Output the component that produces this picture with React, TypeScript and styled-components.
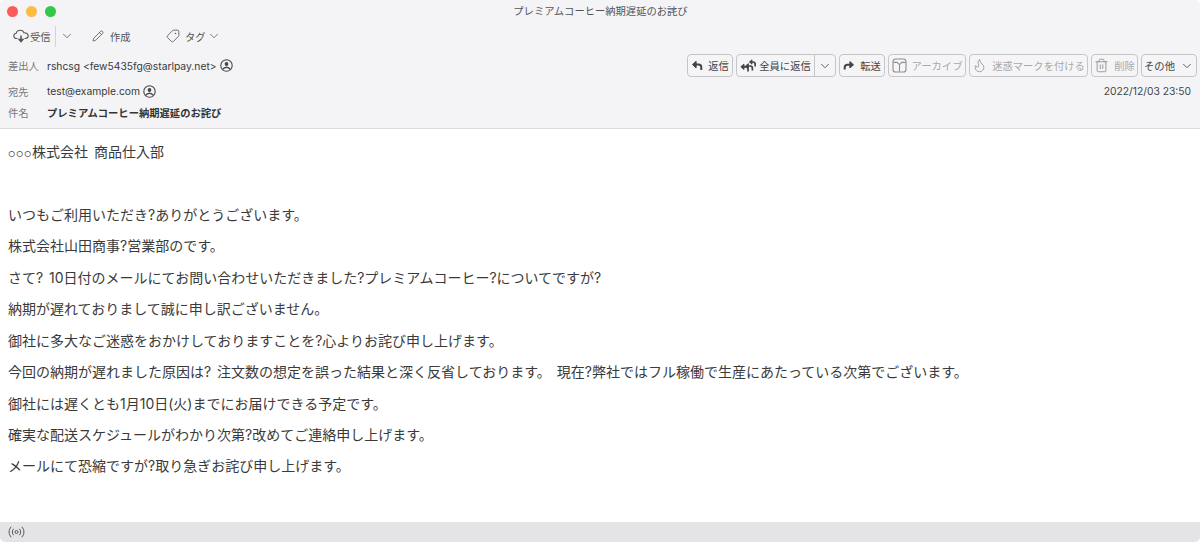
import React from "react";
import styled, { createGlobalStyle } from "styled-components";
import { ChevronDown, Flame, Pencil, Tag, Trash2 } from "lucide-react";

const FONT = `"Inter", "Liberation Sans", "Noto Sans CJK JP", sans-serif`;

const LINES = [
    "",
    "いつもご利用いただき?ありがとうございます。",
    "株式会社山田商事?営業部のです。",
    "さて? 10日付のメールにてお問い合わせいただきました?プレミアムコーヒー?についてですが?",
    "納期が遅れておりまして誠に申し訳ございません。",
    "御社に多大なご迷惑をおかけしておりますことを?心よりお詫び申し上げます。",
    "今回の納期が遅れました原因は? 注文数の想定を誤った結果と深く反省しております。 現在?弊社ではフル稼働で生産にあたっている次第でございます。",
    "御社には遅くとも1月10日(火)までにお届けできる予定です。",
    "確実な配送スケジュールがわかり次第?改めてご連絡申し上げます。",
    "メールにて恐縮ですが?取り急ぎお詫び申し上げます。",
];

const CloudIcon = () => (
    <svg width="16" height="16" viewBox="0 0 16 16" fill="none" stroke="currentColor" strokeWidth="1.1">
        <path d="M4.5 10.5H3.6C2 10.5 0.8 9.4 0.8 7.9C0.8 6.5 1.9 5.4 3.2 5.3C3.6 3.4 5.2 2.2 7.2 2.2C9 2.2 10.5 3.2 11 4.8C13.3 4.6 15.2 6 15.2 7.8C15.2 9.4 14 10.5 12.3 10.5H11.5" />
        <path d="M8 7.5V13.4" strokeWidth="1.5" />
        <path d="M5.8 11.4L8 14L10.2 11.4Z" fill="currentColor" />
    </svg>
);

const PersonGlyph = () => (
    <svg width="13" height="13" viewBox="0 0 13 13" fill="none" stroke="#48484a" strokeWidth="1.1">
        <circle cx="6.5" cy="6.5" r="5.7" />
        <circle cx="6.5" cy="5" r="1.9" fill="#48484a" stroke="none" />
        <path d="M3 10.3C3.6 8.9 4.8 8.2 6.5 8.2C8.2 8.2 9.4 8.9 10 10.3" strokeWidth="1.4" />
    </svg>
);

const ReplyIcon = () => (
    <svg width="12" height="11" viewBox="0 0 11 11" fill="none" stroke="currentColor">
        <path d="M4.6 1.3L1 4.6L4.6 7.9Z" fill="currentColor" strokeWidth="1" strokeLinejoin="round" />
        <path d="M4 4.6H7C8.8 4.6 9.8 5.8 9.8 7.6V10" strokeWidth="2" />
    </svg>
);

const ForwardIcon = () => (
    <svg width="12" height="11" viewBox="0 0 11 11" fill="none" stroke="currentColor">
        <path d="M6.4 1.6L10 4.8L6.4 8Z" fill="currentColor" strokeWidth="1" strokeLinejoin="round" />
        <path d="M7 4.8H4C2.2 4.8 1.2 6 1.2 7.8V9.6" strokeWidth="2" />
    </svg>
);

const ReplyAllIcon = () => (
    <svg width="16" height="14" viewBox="0 0 16 14" fill="none" stroke="currentColor">
        <path d="M4 5L0.8 7.8L4 10.6Z" fill="currentColor" strokeWidth="0.8" strokeLinejoin="round" />
        <path d="M3.4 7.8H6C7.4 7.8 8 8.8 8 10.2V12.4" strokeWidth="1.7" />
        <path d="M8.4 4.6L5.6 7L8.4 9.2Z" fill="currentColor" strokeWidth="0.8" strokeLinejoin="round" />
        <path d="M8 7H10.4C11.8 7 12.4 8 12.4 9.4V11.6" strokeWidth="1.7" />
        <path d="M12 0.8L9.4 3L12 5.2Z" fill="currentColor" strokeWidth="0.8" strokeLinejoin="round" />
        <path d="M11.6 3H13C14.4 3 15.2 4 15.2 5.4V7.4" strokeWidth="1.7" />
    </svg>
);

const ArchiveIcon = () => (
    <svg width="15" height="15" viewBox="0 0 15 15" fill="none" stroke="currentColor" strokeWidth="1.1">
        <rect x="1" y="1" width="13" height="13" rx="2.6" />
        <path d="M1.4 4.4H5L7.5 6.6L10 4.4H13.6" />
        <path d="M7.5 6.6V13.6" />
    </svg>
);

const RadioIcon = () => (
    <svg width="17" height="12" viewBox="0 0 17 12" fill="none" stroke="currentColor" strokeWidth="1">
        <circle cx="8.5" cy="6" r="1.5" />
        <path d="M5.6 2.8C4 4.6 4 7.4 5.6 9.2" />
        <path d="M11.4 2.8C13 4.6 13 7.4 11.4 9.2" />
        <path d="M3.2 0.8C0.4 3.8 0.4 8.2 3.2 11.2" />
        <path d="M13.8 0.8C16.6 3.8 16.6 8.2 13.8 11.2" />
    </svg>
);

const App = () => {
    return (
        <Window>
            <GlobalStyle />
            <Header>
                <TitleBar>
                    <Lights>
                        <Light color="#fc5b57" />
                        <Light color="#fdbc40" />
                        <Light color="#34c84a" />
                    </Lights>
                    <Title>プレミアムコーヒー納期遅延のお詫び</Title>
                </TitleBar>
                <Toolbar>
                    <ToolItem width={42}>
                        <CloudIcon />
                        受信
                    </ToolItem>
                    <ToolDivider />
                    <ToolChevron>
                        <ChevronDown size={14} strokeWidth={1.3} />
                    </ToolChevron>
                    <ToolItem width={74}>
                        <Pencil size={12} strokeWidth={1.6} />
                        <ToolLabel left={5}>作成</ToolLabel>
                    </ToolItem>
                    <ToolItem width={70}>
                        <MirrorTag size={14} strokeWidth={1.4} />
                        <ToolLabel left={4}>タグ</ToolLabel>
                        <ChevronDown size={14} strokeWidth={1.3} />
                    </ToolItem>
                </Toolbar>
                <MetaRow height={29}>
                    <Label>差出人</Label>
                    <Value>rshcsg &lt;few5435fg@starlpay.net&gt;</Value>
                    <PersonGlyph />
                    <Actions>
                        <ActionButton width={46}>
                            <ReplyIcon />
                            返信
                        </ActionButton>
                        <SplitButton>
                            <SplitMain>
                                <ReplyAllIcon />
                                全員に返信
                            </SplitMain>
                            <SplitArrow>
                                <ChevronDown size={14} strokeWidth={1.4} />
                            </SplitArrow>
                        </SplitButton>
                        <ActionButton width={46}>
                            <ForwardIcon />
                            転送
                        </ActionButton>
                        <ActionButton width={78} disabled>
                            <DimIcon>
                                <ArchiveIcon />
                            </DimIcon>
                            アーカイブ
                        </ActionButton>
                        <ActionButton width={119} disabled>
                            <DimIcon>
                                <Flame size={15} strokeWidth={1.3} />
                            </DimIcon>
                            迷惑マークを付ける
                        </ActionButton>
                        <ActionButton width={47} disabled>
                            <DimIcon>
                                <Trash2 size={15} strokeWidth={1.4} />
                            </DimIcon>
                            削除
                        </ActionButton>
                        <ActionButton width={56}>
                            その他
                            <ChevronDown size={14} strokeWidth={1.4} />
                        </ActionButton>
                    </Actions>
                </MetaRow>
                <MetaRow height={22}>
                    <Label>宛先</Label>
                    <Value>test@example.com</Value>
                    <PersonGlyph />
                    <DateText>2022/12/03 23:50</DateText>
                </MetaRow>
                <MetaRow height={21}>
                    <Label>件名</Label>
                    <Subject>プレミアムコーヒー納期遅延のお詫び</Subject>
                </MetaRow>
            </Header>
            <Body>
                <Line>
                    <SmallCircles>○○○</SmallCircles>株式会社 商品仕入部
                </Line>
                {LINES.map((line, ind) => (
                    <Line key={ind}>{line}</Line>
                ))}
            </Body>
            <StatusBar>
                <RadioIcon />
            </StatusBar>
        </Window>
    );
};

export default App;

const GlobalStyle = createGlobalStyle`
    html, body {
        margin: 0;
        padding: 0;
        background: #ffffff;
    }
`;

const Window = styled.div`
    width: 1200px;
    height: 542px;
    overflow: hidden;
    border-radius: 5px;
    display: flex;
    flex-direction: column;
    font-family: ${FONT};
    color: #333333;
`;

const Header = styled.header`
    height: 129px;
    box-sizing: border-box;
    flex: none;
    background: #f4f4f6;
    border-bottom: 1px solid #dcdcdc;
    display: flex;
    flex-direction: column;
`;

const TitleBar = styled.div`
    height: 21px;
    padding: 2px 0 0 7px;
    box-sizing: border-box;
    display: flex;
    align-items: center;
    position: relative;
`;

const Lights = styled.div`
    display: flex;
    gap: 8px;
`;

const Light = styled.span<{ color: string }>`
    width: 11px;
    height: 11px;
    border-radius: 50%;
    background: ${(p) => p.color};
`;

const Title = styled.div`
    position: absolute;
    top: 3px;
    left: 1px;
    right: 0;
    text-align: center;
    font-size: 10.3px;
    color: #555558;
`;

const Toolbar = styled.div`
    height: 30px;
    padding-left: 13px;
    display: flex;
    align-items: center;
    color: #555558;
`;

const ToolItem = styled.div<{ width: number }>`
    width: ${(p) => p.width}px;
    flex: none;
    display: flex;
    align-items: center;
    gap: 1px;
    font-size: 10.3px;
`;

const ToolLabel = styled.span<{ left: number }>`
    margin-left: ${(p) => p.left}px;
`;

const MirrorTag = styled(Tag)`
    transform: scaleX(-1);
`;

const ToolDivider = styled.span`
    width: 1px;
    height: 21px;
    background: #d4d4d6;
`;

const ToolChevron = styled.div`
    width: 36px;
    padding-left: 4px;
    box-sizing: border-box;
    display: flex;
`;

const MetaRow = styled.div<{ height: number }>`
    height: ${(p) => p.height}px;
    padding: 0 3px 0 8px;
    display: flex;
    align-items: center;
    font-size: 10.3px;
`;

const Label = styled.span`
    width: 39px;
    flex: none;
    color: #77777a;
`;

const Value = styled.span`
    color: #3a3a3c;
    margin-right: 3px;
`;

const Actions = styled.div`
    margin-left: auto;
    display: flex;
    gap: 3px;
`;

const ActionButton = styled.div<{ width: number; disabled?: boolean }>`
    width: ${(p) => p.width}px;
    height: 23px;
    box-sizing: border-box;
    display: flex;
    align-items: center;
    justify-content: center;
    gap: 5px;
    border: 1px solid #c6c6c8;
    border-radius: 4px;
    background: #f5f5f7;
    font-size: 10.3px;
    white-space: nowrap;
    color: ${(p) => (p.disabled ? "#a8a8aa" : "#444446")};
`;

const DimIcon = styled.span`
    display: flex;
    color: #8e8e90;
`;

const SplitButton = styled.div`
    height: 23px;
    box-sizing: border-box;
    display: flex;
    border: 1px solid #c6c6c8;
    border-radius: 4px;
    background: #f5f5f7;
    font-size: 10.3px;
    color: #444446;
`;

const SplitMain = styled.div`
    width: 77px;
    display: flex;
    align-items: center;
    justify-content: center;
    gap: 3px;
    border-right: 1px solid #c6c6c8;
    white-space: nowrap;
`;

const SplitArrow = styled.div`
    width: 20px;
    display: flex;
    align-items: center;
    justify-content: center;
`;

const DateText = styled.span`
    margin-left: auto;
    margin-right: 6px;
    color: #444446;
    font-size: 10.3px;
`;

const Subject = styled.span`
    font-weight: 700;
    color: #333333;
`;

const Body = styled.main`
    flex: 1;
    background: #ffffff;
    padding: 7px 8px 0;
    color: #3a3a3a;
`;

const Line = styled.div`
    height: 31.45px;
    line-height: 31.45px;
    font-size: 14px;
    word-spacing: 2px;
    white-space: nowrap;
`;

const SmallCircles = styled.span`
    font-size: 8px;
    letter-spacing: 0.7px;
    word-spacing: 0;
    color: #555555;
`;

const StatusBar = styled.footer`
    height: 20px;
    flex: none;
    background: #e4e4e6;
    padding-left: 8px;
    display: flex;
    align-items: center;
    color: #555558;
`;
